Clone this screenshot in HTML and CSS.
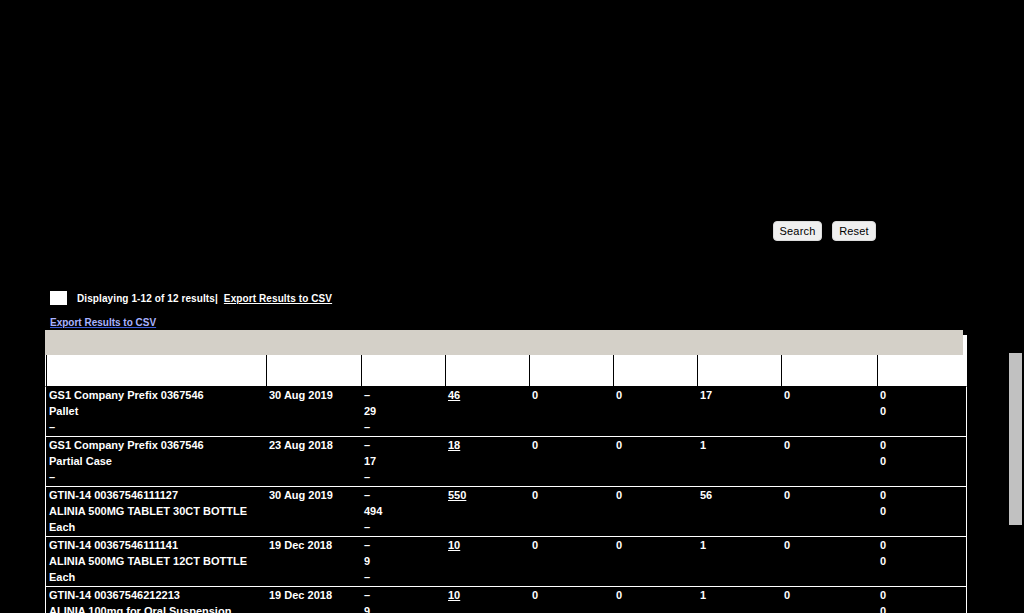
FILE: index.html
```html
<!DOCTYPE html>
<html lang="en">
<head>
<meta charset="utf-8">
<title>Results</title>
<link rel="stylesheet" href="styles.css">
</head>
<body>
<div class="page">
  <div class="search-actions">
    <button class="btn btn-search" type="button">Search</button>
    <button class="btn btn-reset" type="button">Reset</button>
  </div>

  <div class="results-bar">
    <span class="check-box"></span>
    <span class="results-count">Displaying 1-12 of 12 results|</span>
    <a class="export-inline" href="#">Export Results to CSV</a>
  </div>

  <div class="export-line"><a class="export-link" href="#">Export Results to CSV</a></div>

  <div class="grid">
    <div class="grid-toolbar"></div>
    <table class="grid-table">
      <colgroup>
        <col class="c-item"><col class="c-date"><col class="c-num"><col class="c-num"><col class="c-num"><col class="c-num"><col class="c-num"><col class="c-wide"><col class="c-last">
      </colgroup>
      <thead>
        <tr><th></th><th></th><th></th><th></th><th></th><th></th><th></th><th></th><th></th></tr>
      </thead>
      <tbody>
        <tr>
          <td>GS1 Company Prefix 0367546<br>Pallet<br>–</td>
          <td>30 Aug 2019</td>
          <td>–<br>29<br>–</td>
          <td><a class="num-link" href="#">46</a></td>
          <td>0</td><td>0</td><td>17</td><td>0</td>
          <td>0<br>0</td>
        </tr>
        <tr>
          <td>GS1 Company Prefix 0367546<br>Partial Case<br>–</td>
          <td>23 Aug 2018</td>
          <td>–<br>17<br>–</td>
          <td><a class="num-link" href="#">18</a></td>
          <td>0</td><td>0</td><td>1</td><td>0</td>
          <td>0<br>0</td>
        </tr>
        <tr>
          <td>GTIN-14 00367546111127<br>ALINIA 500MG TABLET 30CT BOTTLE<br>Each</td>
          <td>30 Aug 2019</td>
          <td>–<br>494<br>–</td>
          <td><a class="num-link" href="#">550</a></td>
          <td>0</td><td>0</td><td>56</td><td>0</td>
          <td>0<br>0</td>
        </tr>
        <tr>
          <td>GTIN-14 00367546111141<br>ALINIA 500MG TABLET 12CT BOTTLE<br>Each</td>
          <td>19 Dec 2018</td>
          <td>–<br>9<br>–</td>
          <td><a class="num-link" href="#">10</a></td>
          <td>0</td><td>0</td><td>1</td><td>0</td>
          <td>0<br>0</td>
        </tr>
        <tr>
          <td>GTIN-14 00367546212213<br>ALINIA 100mg for Oral Suspension<br>Each</td>
          <td>19 Dec 2018</td>
          <td>–<br>9<br>–</td>
          <td><a class="num-link" href="#">10</a></td>
          <td>0</td><td>0</td><td>1</td><td>0</td>
          <td>0<br>0</td>
        </tr>
      </tbody>
    </table>
  </div>
</div>
<div class="scroll-thumb"></div>
</body>
</html>
```

FILE: styles.css
```css
html, body {
  margin: 0;
  padding: 0;
  background: #000;
  overflow: hidden;
  height: 613px;
}

body {
  font-family: "Liberation Sans", Arial, sans-serif;
  color: #fff;
}

.page {
  width: 1024px;
}

.search-actions {
  display: flex;
  justify-content: flex-end;
  gap: 10px;
  padding: 221px 148px 0 0;
}

.btn {
  height: 20px;
  padding: 0;
  border: 1px solid #dcdcdc;
  border-radius: 4px;
  background: #efefef;
  color: #000;
  font-family: "Liberation Sans", Arial, sans-serif;
  font-size: 11px;
  line-height: 18px;
  letter-spacing: 0.2px;
}

.btn-search { width: 49px; }
.btn-reset { width: 44px; }

.results-bar {
  display: flex;
  align-items: center;
  height: 18px;
  margin-top: 48px;
  padding-left: 50px;
  font-size: 10px;
  font-weight: bold;
  letter-spacing: 0.1px;
}

.check-box {
  width: 17px;
  height: 14px;
  background: #fff;
  margin-right: 10px;
}

.results-count {
  margin-right: 6px;
}

.export-inline {
  color: #fff;
  text-decoration: underline;
}

.export-line {
  height: 15px;
  line-height: 16px;
  margin-top: 7px;
  padding: 1px 0 0 50px;
  font-size: 10px;
  font-weight: bold;
}

.export-link {
  color: #a9b3ff;
  text-decoration: underline;
  text-decoration-color: #3c5ad6;
}

.grid {
  margin-left: 45px;
  width: 922px;
}

.grid-toolbar {
  position: relative;
  z-index: 1;
  width: 918px;
  height: 25px;
  background: #d4d0c8;
}

.grid-table {
  margin-top: -20px;
  width: 922px;
  table-layout: fixed;
  border-collapse: separate;
  border-spacing: 0;
  font-size: 11px;
  font-weight: bold;
}

.c-item { width: 221px; }
.c-date { width: 95px; }
.c-num { width: 84px; }
.c-wide { width: 96px; }
.c-last { width: 90px; }

.grid-table thead tr {
  height: 51px;
}

.grid-table th {
  background: #fff;
  border-left: 1px solid #000;
  padding: 0;
}

.grid-table th:first-child {
  border-left: 1px solid #fff;
  box-shadow: inset 1px 0 0 #000;
}

.grid-table td {
  border-top: 1px solid #fff;
  padding: 0 3px 1px 3px;
  line-height: 16px;
  vertical-align: top;
  white-space: nowrap;
  overflow: hidden;
}

.grid-table tbody tr:first-child td {
  border-top-color: #000;
}

.grid-table td:first-child {
  border-left: 1px solid #fff;
}

.grid-table td:last-child {
  border-right: 1px solid #fff;
}

.num-link {
  color: #fff;
  text-decoration: underline;
}

.scroll-thumb {
  position: fixed;
  left: 1009px;
  top: 353px;
  width: 13px;
  height: 172px;
  background: #c1c1c1;
}
```
